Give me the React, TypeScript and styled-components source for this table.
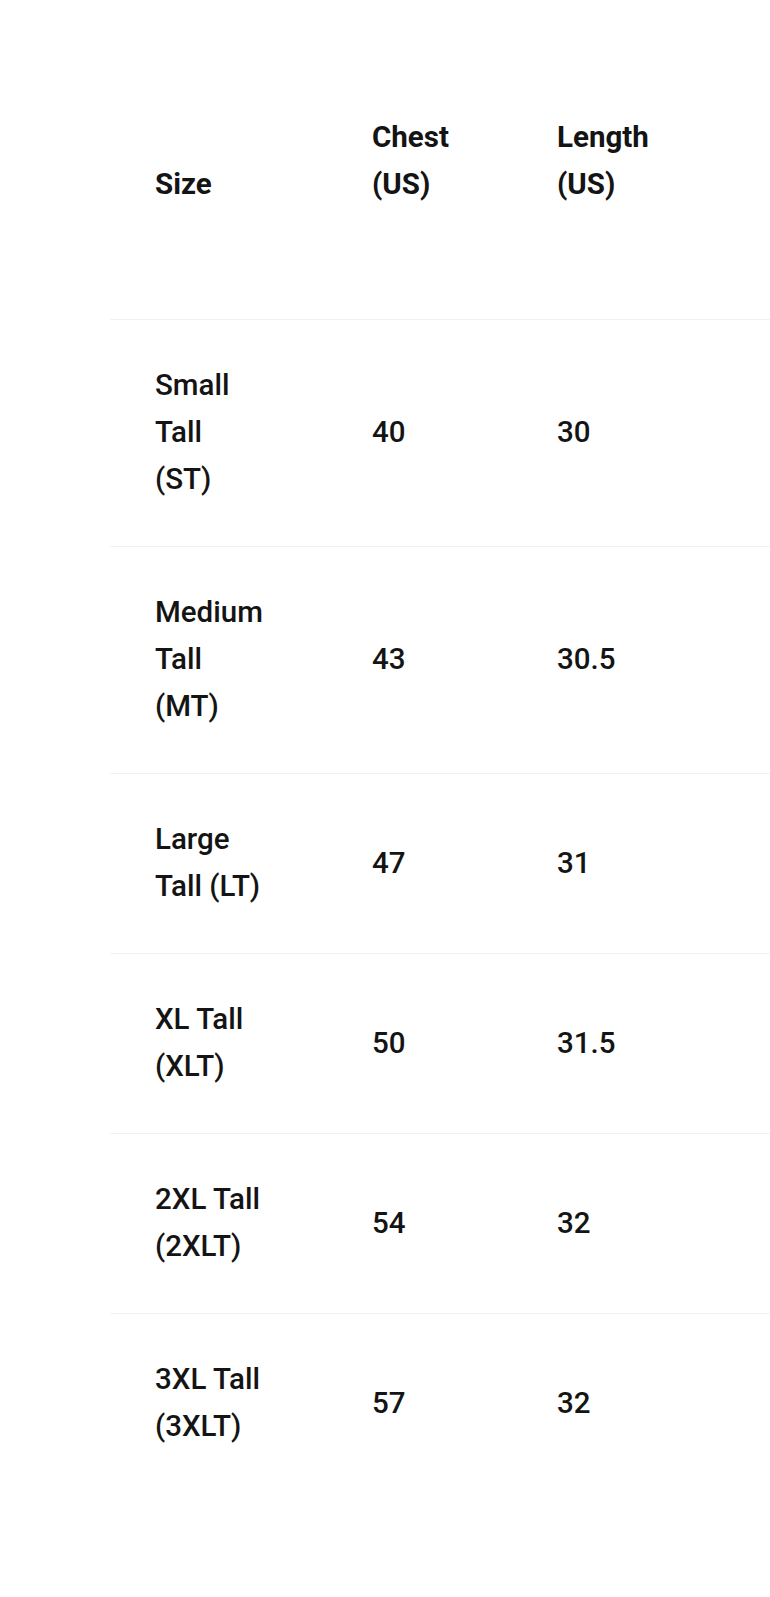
import styled, { createGlobalStyle } from 'styled-components'

type SizeRow = {
  size: string
  chest: string
  length: string
}

const rows: SizeRow[] = [
  { size: 'Small Tall (ST)', chest: '40', length: '30' },
  { size: 'Medium Tall (MT)', chest: '43', length: '30.5' },
  { size: 'Large Tall (LT)', chest: '47', length: '31' },
  { size: 'XL Tall (XLT)', chest: '50', length: '31.5' },
  { size: '2XL Tall (2XLT)', chest: '54', length: '32' },
  { size: '3XL Tall (3XLT)', chest: '57', length: '32' },
]

const App = () => {
  return (
    <>
      <GlobalStyle />
      <Table>
        <HeadRow>
          <HeadCell>Size</HeadCell>
          <HeadCell>
            Chest
            <br />
            (US)
          </HeadCell>
          <HeadCell>
            Length
            <br />
            (US)
          </HeadCell>
        </HeadRow>
        {rows.map(row => (
          <BodyRow key={row.size}>
            <SizeCell>{row.size}</SizeCell>
            <Cell>{row.chest}</Cell>
            <Cell>{row.length}</Cell>
          </BodyRow>
        ))}
      </Table>
    </>
  )
}

export default App

//style
const GlobalStyle = createGlobalStyle`
  body {
    margin: 0;
    background: #ffffff;
    font-family: Roboto, "Liberation Sans", Arial, sans-serif;
    color: #141414;
    overflow-x: hidden;
  }
`

const Table = styled.div`
  margin: 71px 0 0 110px;
  padding-bottom: 60px;
`

const Row = styled.div`
  display: grid;
  grid-template-columns: 217px 185px 1fr;
  line-height: 47px;
  font-size: 29.5px;
`

const HeadRow = styled(Row)`
  align-items: end;
  padding: 43px 0 111px;
`

const BodyRow = styled(Row)`
  align-items: center;
  border-top: 1px solid #f1f1f1;
  padding: 42px 0 43px;
`

const HeadCell = styled.div`
  padding-left: 45px;
  font-weight: 700;
`

const Cell = styled.div`
  padding-left: 45px;
  font-weight: 500;
`

const SizeCell = styled(Cell)`
  padding-right: 62px;
`
